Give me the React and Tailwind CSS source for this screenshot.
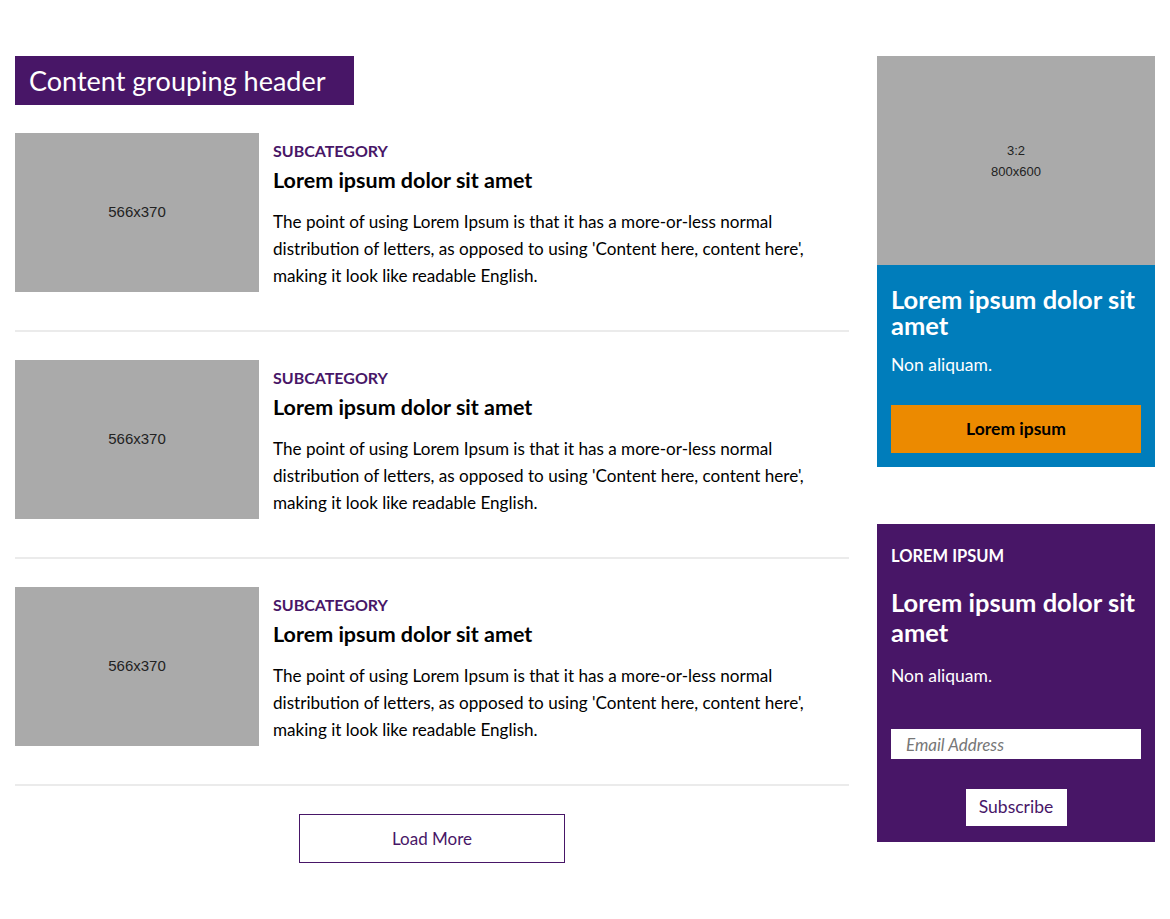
const font = { fontFamily: 'Lato, "Open Sans", sans-serif' }

const items = [1, 2, 3]

function Placeholder({ children, className = '' }) {
  return (
    <div className={`bg-[#aaaaaa] flex flex-col items-center justify-center text-[#222] font-['Liberation_Sans',Arial,sans-serif] ${className}`}>
      {children}
    </div>
  )
}

function Article() {
  return (
    <div className="flex gap-[14px] pt-[28px] pb-[38px] border-b-2 border-[#ebebeb]">
      <Placeholder className="w-[244px] h-[159px] shrink-0 text-[15px]">566x370</Placeholder>
      <div className="flex-1 pt-[7px]">
        <div className="text-[16px] font-bold text-[#481667] leading-[22px]">SUBCATEGORY</div>
        <h3 className="text-[21.5px] font-bold text-black leading-[26px] mt-[5px]">Lorem ipsum dolor sit amet</h3>
        <p className="text-[17.1px] text-black leading-[27px] mt-[15px]">
          The point of using Lorem Ipsum is that it has a more-or-less normal distribution of letters, as opposed to using 'Content here, content here', making it look like readable English.
        </p>
      </div>
    </div>
  )
}

export default function App() {
  return (
    <div style={font} className="bg-white min-h-[919px] w-[1170px] px-[15px] pt-[56px] flex gap-[28px]">
      {/* main column */}
      <div className="flex-1">
        <div className="inline-block bg-[#481667] text-white text-[27px] leading-[49px] h-[49px] pl-[14px] pr-[28px]">
          Content grouping header
        </div>
        {items.map(i => <Article key={i} />)}
        <div className="flex justify-center pt-[28px]">
          <button className="w-[266px] h-[49px] border border-[#481667] text-[#481667] text-[17px] bg-white">
            Load More
          </button>
        </div>
      </div>

      {/* sidebar */}
      <div className="w-[278px] shrink-0">
        <Placeholder className="h-[209px] text-[13px] leading-[21px]">
          <span>3:2</span>
          <span>800x600</span>
        </Placeholder>
        <div className="bg-[#007dbb] px-[14px] pt-[21px] pb-[14px]">
          <h3 className="text-white text-[25.5px] font-bold leading-[26px]">Lorem ipsum dolor sit amet</h3>
          <p className="text-white text-[17.5px] leading-[24px] mt-[15px]">Non aliquam.</p>
          <button className="mt-[28px] w-full h-[48px] bg-[#ec8a00] text-black text-[17.5px] font-bold">
            Lorem ipsum
          </button>
        </div>

        <div className="bg-[#481667] mt-[57px] px-[14px] pt-[21px] pb-[16px]">
          <div className="text-white text-[16.5px] font-bold leading-[22px]">LOREM IPSUM</div>
          <h3 className="text-white text-[25.5px] font-bold leading-[30px] mt-[20px]">Lorem ipsum dolor sit amet</h3>
          <p className="text-white text-[17.5px] leading-[24px] mt-[17px]">Non aliquam.</p>
          <input
            type="text"
            placeholder="Email Address"
            className="block mt-[41px] w-full h-[30px] bg-white px-[15px] text-[17px] italic placeholder:text-[#777] outline-none"
          />
          <div className="flex justify-center mt-[30px]">
            <button className="w-[101px] h-[37px] bg-white text-[#481667] text-[17.5px]">Subscribe</button>
          </div>
        </div>
      </div>
    </div>
  )
}
